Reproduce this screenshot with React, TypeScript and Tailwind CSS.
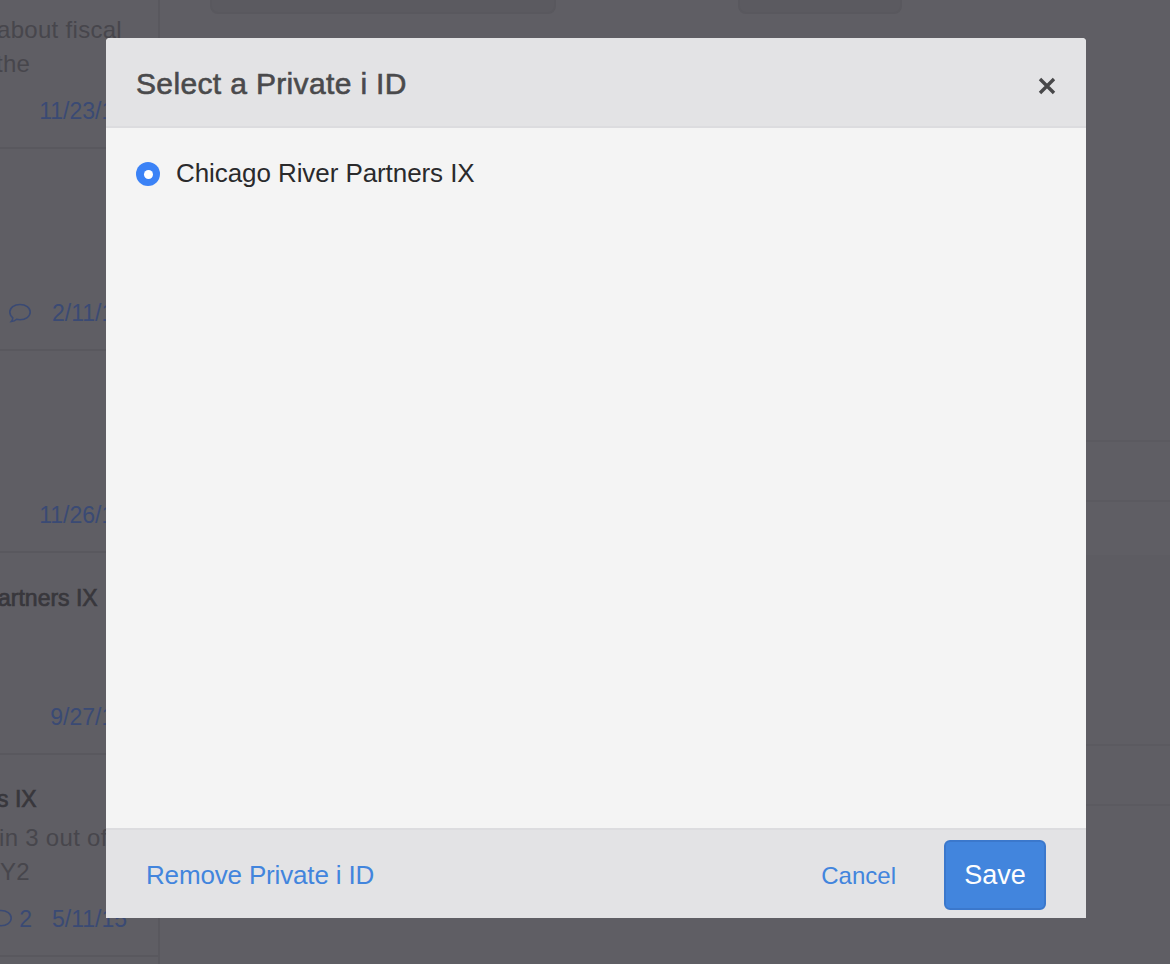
const font = "font-['Liberation_Sans',Arial,sans-serif]";

function CommentIcon({ className }: { className: string }) {
  return (
    <svg viewBox="0 0 24 20" fill="none" stroke="currentColor" strokeWidth="1.6" className={className}>
      <path d="M12 1.5c5.7 0 10.2 3.2 10.2 7.6S17.700 16.700 12 16.700c-1.200 0-2.300-.1-3.400-.4-1.300 1.300-3.100 2.100-5.300 2.200 1-1.100 1.500-2.300 1.500-3.700C2.900 13.400 1.800 11.400 1.800 9.100 1.800 4.700 6.300 1.500 12 1.500Z" />
    </svg>
  );
}

function SidebarRow({ children }: { children: React.ReactNode }) {
  return (
    <div className="flex h-[202px] shrink-0 flex-col border-b-2 border-[#59585e] pt-[29px] pr-[31px] pb-[23px]">
      {children}
    </div>
  );
}

function Title({ children, className }: { children: React.ReactNode; className: string }) {
  return (
    <div className={`whitespace-nowrap text-[23px] leading-[32px] text-[#38373c] [-webkit-text-stroke:0.7px_#38373c] ${className}`}>
      {children}
    </div>
  );
}

function Line({ children, className }: { children: React.ReactNode; className?: string }) {
  return <div className={`whitespace-nowrap text-[24px] leading-[34px] tracking-[0.3px] text-[#47464c] ${className ?? ""}`}>{children}</div>;
}

function DateLine({ date, comment, count }: { date: string; comment?: boolean; count?: string }) {
  return (
    <div className="mt-auto flex items-center justify-end text-[23px] leading-[26px] text-[#3a4a74]">
      {comment && <CommentIcon className={count ? "mr-[6px] h-[20px] w-[24px] shrink-0" : "mr-[20px] h-[20px] w-[24px] shrink-0"} />}
      {count && <span className="mr-[20px]">{count}</span>}
      <span>{date}</span>
    </div>
  );
}

function Sidebar() {
  return (
    <aside className="h-full w-[160px] shrink-0 overflow-hidden border-r-2 border-[#59585e]">
      <div className="-mt-[53px] flex flex-col">
        <SidebarRow>
          <Line className="mt-[37px] -ml-[3px]">about fiscal</Line>
          <Line className="-ml-[4px]">the</Line>
          <DateLine date="11/23/15" />
        </SidebarRow>
        <SidebarRow>
          <DateLine date="2/11/15" comment />
        </SidebarRow>
        <SidebarRow>
          <DateLine date="11/26/15" />
        </SidebarRow>
        <SidebarRow>
          <Title className="-ml-[2px]">artners IX</Title>
          <DateLine date="9/27/15" />
        </SidebarRow>
        <SidebarRow>
          <Title className="-mt-[1px] -ml-[3px]">s IX</Title>
          <Line className="mt-[6px] -ml-[1px]">in 3 out of</Line>
          <Line>Y2</Line>
          <DateLine date="5/11/15" comment count="2" />
        </SidebarRow>
      </div>
    </aside>
  );
}

function Main() {
  return (
    <main className="flex h-full min-w-0 flex-1 flex-col">
      <div className="-mt-[10px] flex h-[24px] shrink-0 pl-[50px]">
        <div className="h-full w-[346px] rounded-[8px] border-2 border-[#59585e] bg-[#5b5a60]" />
        <div className="ml-[182px] h-full w-[164px] rounded-[8px] border-2 border-[#59585e] bg-[#5b5a60]" />
      </div>
      <div className="mt-[236px] h-[80px] shrink-0 bg-[#5e5d63]" />
      <div className="mt-[110px] h-[62px] shrink-0 border-y-2 border-[#5b5a60]" />
      <div className="mt-[53px] h-[75px] shrink-0 bg-[#5d5c62]" />
      <div className="mt-[114px] h-[62px] shrink-0 border-y-2 border-[#5b5a60]" />
    </main>
  );
}

function Modal() {
  return (
    <div className="absolute top-[38px] left-[106px] flex h-[880px] w-[980px] flex-col overflow-hidden rounded-t-[4px] bg-[#f4f4f4]">
      <header className="flex h-[90px] shrink-0 items-center justify-between border-b-2 border-[#dcdcdf] bg-[#e3e3e5] px-[30px]">
        <h1 className="mt-[3px] text-[30px] font-normal tracking-[0.35px] text-[#4a4a4c] [-webkit-text-stroke:0.6px_#4a4a4c]">
          Select a Private i ID
        </h1>
        <svg viewBox="0 0 18 18" className="mt-[8px] h-[18px] w-[18px]" stroke="#48484a" strokeWidth="3.4">
          <path d="M2 2l14 14M16 2L2 16" />
        </svg>
      </header>
      <div className="flex-1 px-[30px] pt-[31px]">
        <label className="flex items-center gap-[16px] text-[26px] leading-[32px] text-[#2a2a2c]">
          <span className="flex h-[24px] w-[24px] items-center justify-center rounded-full bg-[#3b82f6]">
            <span className="h-[9px] w-[9px] rounded-full bg-white" />
          </span>
          <span className="-mt-[2px] tracking-[-0.08px]">Chicago River Partners IX</span>
        </label>
      </div>
      <footer className="flex h-[90px] shrink-0 items-center border-t-2 border-[#dcdcdf] bg-[#e3e3e5] px-[40px] pt-[2px] text-[26px] text-[#4285dd]">
        <button className="tracking-[-0.16px]">Remove Private i ID</button>
        <button className="mt-[2px] mr-[48px] ml-auto text-[24px]">Cancel</button>
        <button className="h-[70px] w-[102px] rounded-[6px] border-2 border-[#3b78cc] bg-[#4285dd] text-[27px] text-[#fdfdfd]">
          Save
        </button>
      </footer>
    </div>
  );
}

export default function App() {
  return (
    <div className={`relative flex h-[964px] w-[1170px] overflow-hidden bg-[#5f5e64] ${font}`}>
      <Sidebar />
      <Main />
      <Modal />
    </div>
  );
}
